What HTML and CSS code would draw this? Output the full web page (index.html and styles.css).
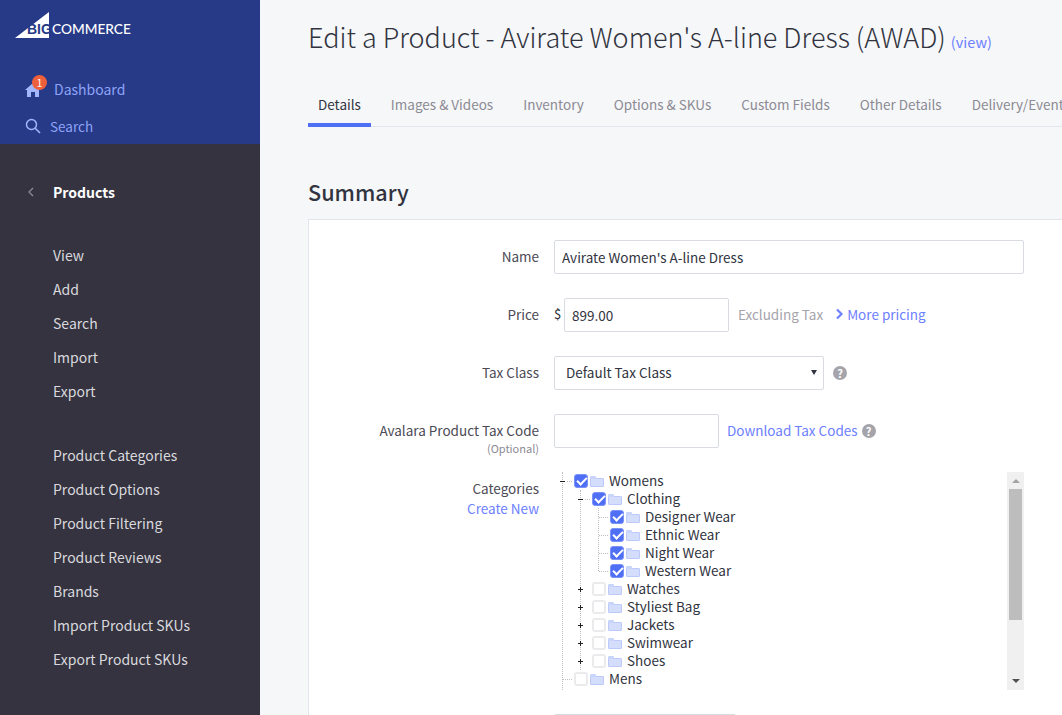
FILE: index.html
```html
<!DOCTYPE html>
<html lang="en">
<head>
    <meta charset="UTF-8">
    <title>Edit a Product</title>
    <link rel="stylesheet" href="styles.css">
</head>
<body>
    <aside class="sidebar">
        <div class="sidebar-top">
            <svg class="logo" width="120" height="30" viewBox="0 0 120 30">
                <polygon points="0,26 34,0 34,26" fill="#fff"/>
                <text x="12" y="22" class="logo-big">BIG</text>
                <text x="37" y="22" class="logo-commerce">COMMERCE</text>
            </svg>
            <a class="top-link top-link-dash" href="#">
                <span class="home-icon">
                    <svg width="16" height="14" viewBox="0 0 16 14">
                        <path d="M8 0 L16 7 L14 7 L14 14 L10 14 L10 9 L6 9 L6 14 L2 14 L2 7 L0 7 Z" fill="#a3b5fb"/>
                    </svg>
                    <span class="badge">1</span>
                </span>
                Dashboard
            </a>
            <a class="top-link top-link-search" href="#">
                <svg width="16" height="16" viewBox="0 0 16 16">
                    <circle cx="6.5" cy="6.5" r="5" fill="none" stroke="#a3b5fb" stroke-width="1.5"/>
                    <line x1="10.2" y1="10.2" x2="15" y2="15" stroke="#a3b5fb" stroke-width="1.6"/>
                </svg>
                Search
            </a>
        </div>
        <div class="sidebar-nav">
            <div class="nav-title">
                <svg width="6" height="10" viewBox="0 0 6 10">
                    <path d="M5 1 L1 5 L5 9" fill="none" stroke="#8f8e96" stroke-width="1.2"/>
                </svg>
                Products
            </div>
            <ul class="nav-group">
                <li>View</li>
                <li>Add</li>
                <li>Search</li>
                <li>Import</li>
                <li>Export</li>
            </ul>
            <ul class="nav-group">
                <li>Product Categories</li>
                <li>Product Options</li>
                <li>Product Filtering</li>
                <li>Product Reviews</li>
                <li>Brands</li>
                <li>Import Product SKUs</li>
                <li>Export Product SKUs</li>
            </ul>
        </div>
    </aside>

    <main class="main">
        <h1 class="page-title">Edit a Product - Avirate Women's A-line Dress (AWAD) <a href="#">(view)</a></h1>
        <nav class="tabs">
            <a class="tab active" href="#">Details</a>
            <a class="tab" href="#">Images &amp; Videos</a>
            <a class="tab" href="#">Inventory</a>
            <a class="tab" href="#">Options &amp; SKUs</a>
            <a class="tab" href="#">Custom Fields</a>
            <a class="tab" href="#">Other Details</a>
            <a class="tab" href="#">Delivery/Event Date</a>
        </nav>
        <h2 class="section-title">Summary</h2>
        <section class="card">
            <div class="row">
                <label class="row-label">Name</label>
                <input class="field field-name" type="text" value="Avirate Women's A-line Dress">
            </div>
            <div class="row">
                <label class="row-label">Price</label>
                <span class="currency">$</span>
                <input class="field field-price" type="text" value="899.00">
                <span class="muted">Excluding Tax</span>
                <a class="link more-pricing" href="#">
                    <svg width="9" height="12" viewBox="0 0 9 12">
                        <path d="M2 1.5 L6.5 6 L2 10.5" fill="none" stroke="#6d80ff" stroke-width="2.2"/>
                    </svg>
                    More pricing
                </a>
            </div>
            <div class="row">
                <label class="row-label">Tax Class</label>
                <div class="select">Default Tax Class<span class="select-arrow"></span></div>
                <span class="help help-tax">?</span>
            </div>
            <div class="row">
                <label class="row-label">Avalara Product Tax Code<small>(Optional)</small></label>
                <input class="field field-code" type="text">
                <a class="link download" href="#">Download Tax Codes</a>
                <span class="help help-code">?</span>
            </div>
            <div class="row row-tree">
                <label class="row-label">Categories<a class="link" href="#">Create New</a></label>
                <div class="tree-box">
                    <ul class="tree tree-root">
                        <li>
                            <div class="node"><span class="toggle minus"></span><span class="check on"></span><span class="folder"></span>Womens</div>
                            <ul class="tree tree-second">
                                <li>
                                    <div class="node"><span class="toggle minus"></span><span class="check on"></span><span class="folder"></span>Clothing</div>
                                    <ul class="tree tree-leaves">
                                        <li><div class="node"><span class="toggle leaf"></span><span class="check on"></span><span class="folder"></span>Designer Wear</div></li>
                                        <li><div class="node"><span class="toggle leaf"></span><span class="check on"></span><span class="folder"></span>Ethnic Wear</div></li>
                                        <li><div class="node"><span class="toggle leaf"></span><span class="check on"></span><span class="folder"></span>Night Wear</div></li>
                                        <li><div class="node"><span class="toggle leaf"></span><span class="check on"></span><span class="folder"></span>Western Wear</div></li>
                                    </ul>
                                </li>
                                <li><div class="node"><span class="toggle plus"></span><span class="check"></span><span class="folder"></span>Watches</div></li>
                                <li><div class="node"><span class="toggle plus"></span><span class="check"></span><span class="folder"></span>Styliest Bag</div></li>
                                <li><div class="node"><span class="toggle plus"></span><span class="check"></span><span class="folder"></span>Jackets</div></li>
                                <li><div class="node"><span class="toggle plus"></span><span class="check"></span><span class="folder"></span>Swimwear</div></li>
                                <li><div class="node"><span class="toggle plus"></span><span class="check"></span><span class="folder"></span>Shoes</div></li>
                            </ul>
                        </li>
                        <li><div class="node"><span class="toggle leaf"></span><span class="check"></span><span class="folder"></span>Mens</div></li>
                    </ul>
                    <div class="scrollbar">
                        <span class="scroll-up"></span>
                        <span class="scroll-thumb"></span>
                        <span class="scroll-down"></span>
                    </div>
                </div>
            </div>
            <div class="row row-next">
                <span class="row-label"></span>
                <div class="next-field"></div>
            </div>
        </section>
    </main>
</body>
</html>
```

FILE: styles.css
```css
* {
    box-sizing: border-box;
}
html, body {
    height: 715px;
    overflow: hidden;
}
body {
    margin: 0;
    display: flex;
    font-family: "Noto Sans CJK SC", "Noto Sans", sans-serif;
    font-size: 13.5px;
    color: #313440;
    background-color: #f6f7f9;
}
a {
    text-decoration: none;
}
ul {
    list-style: none;
    margin: 0;
    padding: 0;
}

/* sidebar */
.sidebar {
    width: 260px;
    flex-shrink: 0;
    display: flex;
    flex-direction: column;
}
.sidebar-top {
    height: 144px;
    background-color: #273a87;
    padding: 12px 0 0 15px;
    display: flex;
    flex-direction: column;
}
.logo {
    display: block;
}
.logo-big {
    font-family: "Liberation Sans", sans-serif;
    font-size: 14px;
    font-weight: 700;
    fill: #273a87;
}
.logo-commerce {
    font-family: Lato, sans-serif;
    font-size: 13.7px;
    font-weight: 500;
    fill: #fff;
}
.top-link {
    display: flex;
    align-items: center;
    color: #8ea3f8;
    height: 20px;
}
.top-link-dash {
    margin: 37px 0 0 10px;
    font-size: 14px;
    gap: 13px;
}
.top-link-search {
    margin: 17px 0 0 10px;
    font-size: 13.5px;
    gap: 9px;
}
.home-icon {
    position: relative;
    display: block;
    width: 16px;
    height: 14px;
    margin-top: 2px;
}
.home-icon svg {
    display: block;
}
.badge {
    position: absolute;
    top: -8px;
    left: 7px;
    width: 15px;
    height: 15px;
    border-radius: 50%;
    background-color: #ee5f3b;
    color: #fff;
    font-size: 10px;
    line-height: 15px;
    text-align: center;
}
.sidebar-nav {
    flex: 1;
    background-color: #35333f;
    padding-top: 36px;
    color: #d9d9de;
    font-size: 14px;
}
.nav-title {
    display: flex;
    align-items: center;
    height: 23px;
    padding-left: 28px;
    gap: 19px;
    color: #fff;
    font-weight: 700;
}
.nav-group {
    margin-top: 35px;
    padding-left: 53px;
}
.nav-group + .nav-group {
    margin-top: 30px;
}
.nav-group li {
    height: 34px;
    line-height: 34px;
}

/* main column */
.main {
    flex: 1;
    min-width: 0;
    padding: 16px 0 0 48px;
    overflow: hidden;
}
.page-title {
    margin: 0;
    height: 42px;
    font-size: 27px;
    line-height: 42px;
    font-weight: 300;
    white-space: nowrap;
    color: #313440;
}
.page-title a {
    font-size: 14.5px;
    font-weight: 400;
    color: #6d80ff;
    margin-left: -1px;
}
.tabs {
    display: flex;
    margin-top: 25px;
    height: 44px;
    border-bottom: 1px solid #e3e5ec;
    white-space: nowrap;
}
.tab {
    height: 44px;
    padding: 0 10px;
    margin-right: 10px;
    line-height: 42px;
    color: #8c8a93;
}
.tab.active {
    color: #313440;
    border-bottom: 4px solid #4f6ff5;
}
.section-title {
    margin: 49px 0 0;
    height: 43px;
    font-size: 21.6px;
    line-height: 32px;
    font-weight: 500;
    color: #313440;
}

/* form card */
.card {
    height: 520px;
    background-color: #fff;
    border: 1px solid #e3e5ec;
    border-right: none;
    padding: 20px 0 0;
}
.row {
    display: flex;
    align-items: center;
    height: 34px;
    margin-bottom: 24px;
}
.row-label {
    width: 230px;
    flex-shrink: 0;
    align-self: flex-start;
    padding-top: 7px;
    text-align: right;
    color: #4b4a55;
    line-height: 18px;
    margin-right: 15px;
}
.row-label small {
    display: block;
    margin-top: 2px;
    font-size: 11px;
    line-height: 14px;
    color: #8c8a93;
}
.row-label .link {
    display: block;
    margin-top: 2px;
}
.field {
    height: 34px;
    border: 1px solid #d9dbe2;
    border-radius: 2px;
    background-color: #fff;
    padding: 0 7px;
    font: inherit;
    color: #313440;
}
.field-name {
    width: 470px;
}
.field-price {
    width: 165px;
    margin-left: 2px;
}
.field-code {
    width: 165px;
}
.currency {
    width: 8px;
    margin-bottom: 4px;
    font-size: 13px;
}
.muted {
    color: #a5a4ab;
    margin-left: 9px;
    margin-bottom: 2px;
}
.link {
    color: #6d80ff;
}
.more-pricing {
    margin-left: 12px;
    margin-bottom: 2px;
    display: flex;
    align-items: center;
    gap: 3px;
}
.download {
    margin-left: 8px;
    margin-bottom: 2px;
}
.select {
    position: relative;
    width: 270px;
    height: 34px;
    border: 1px solid #d9dbe2;
    border-radius: 2px;
    padding-left: 11px;
    line-height: 30px;
}
.select-arrow {
    position: absolute;
    right: 6px;
    top: 13px;
    border-left: 3px solid transparent;
    border-right: 3px solid transparent;
    border-top: 5px solid #313440;
}
.help {
    width: 14px;
    height: 14px;
    border-radius: 50%;
    background-color: #a5a4ab;
    color: #fff;
    font-size: 11px;
    font-weight: 700;
    line-height: 14px;
    text-align: center;
}
.help-tax {
    margin-left: 9px;
}
.help-code {
    margin-left: 4px;
}

/* category tree */
.row-tree {
    height: 218px;
    align-items: flex-start;
}
.tree-box {
    position: relative;
    width: 470px;
    height: 218px;
    display: flex;
    justify-content: space-between;
}
.tree-root {
    width: 440px;
}
.tree-second,
.tree-leaves {
    position: relative;
    padding-left: 18px;
}
.node {
    display: flex;
    align-items: center;
    height: 18px;
    padding-bottom: 2px;
    white-space: nowrap;
}
.toggle {
    position: relative;
    align-self: flex-start;
    width: 18px;
    height: 18px;
    flex-shrink: 0;
}
/* dash and dotted stub beside each node */
.minus::before,
.leaf::before {
    content: "";
    position: absolute;
    left: 13px;
    right: 0;
    top: 9px;
    border-top: 1px dotted #bdbdc2;
}
.leaf::before {
    left: 9px;
}
.minus::after,
.plus::after {
    content: "";
    position: absolute;
    left: 6px;
    top: 9px;
    width: 5px;
    height: 1px;
    background-color: #222;
}
.plus::after {
    background:
        linear-gradient(#222, #222) center / 5px 1px no-repeat,
        linear-gradient(#222, #222) center / 1px 5px no-repeat;
    top: 7px;
    height: 5px;
}
.check {
    width: 14px;
    height: 14px;
    margin: 2px 0 0 2px;
    border: 2px solid #ebebed;
    border-radius: 3px;
    background-color: #fff;
    flex-shrink: 0;
    position: relative;
}
.check.on {
    background-color: #4f6ff5;
    border: 1px solid #7b92f8;
}
.check.on::after {
    content: "";
    position: absolute;
    left: 2px;
    top: 2px;
    width: 8px;
    height: 4px;
    border-left: 2px solid #fff;
    border-bottom: 2px solid #fff;
    transform: rotate(-45deg);
}
.folder {
    position: relative;
    width: 14px;
    height: 9px;
    margin: 5px 5px 0 2px;
    background-color: #d5ddfc;
    border: 1px solid #bcc9fb;
    border-radius: 1px;
    flex-shrink: 0;
}
.folder::before {
    content: "";
    position: absolute;
    left: -1px;
    top: -3px;
    width: 6px;
    height: 3px;
    background-color: #c9d4fb;
    border-radius: 1px 1px 0 0;
}
/* dotted guide lines of the tree */
.tree-root::before {
    content: "";
    position: absolute;
    left: 8px;
    top: 0;
    height: 218px;
    border-left: 1px dotted #bdbdc2;
}
.tree-second::before {
    content: "";
    position: absolute;
    left: 26px;
    top: 0;
    height: 180px;
    border-left: 1px dotted #bdbdc2;
}
.tree-leaves::before {
    content: "";
    position: absolute;
    left: 26px;
    top: 0;
    height: 63px;
    border-left: 1px dotted #bdbdc2;
}
.scrollbar {
    width: 17px;
    height: 218px;
    background-color: #f0f0f0;
    display: flex;
    flex-direction: column;
    align-items: center;
}
.scroll-up {
    margin-top: 7px;
    border-left: 4px solid transparent;
    border-right: 4px solid transparent;
    border-bottom: 4px solid #a3a3a3;
}
.scroll-thumb {
    width: 13px;
    height: 131px;
    margin-top: 6px;
    background-color: #bdbdbd;
}
.scroll-down {
    margin-top: auto;
    margin-bottom: 7px;
    border-left: 4px solid transparent;
    border-right: 4px solid transparent;
    border-top: 4px solid #505050;
}
.next-field {
    width: 182px;
    height: 34px;
    border: 1px solid #d9dbe2;
    border-radius: 2px;
}
```
